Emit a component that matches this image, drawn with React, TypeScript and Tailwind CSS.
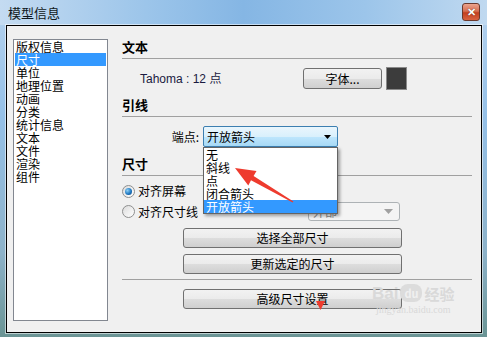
import React from "react";

const cjk = { fontFamily: '"Noto Sans CJK SC", "Liberation Sans", sans-serif' };

const listItems = ["版权信息", "尺寸", "单位", "地理位置", "动画", "分类", "统计信息", "文本", "文件", "渲染", "组件"];
const endOptions = ["无", "斜线", "点", "闭合箭头", "开放箭头"];

function WinButton({ label, className = "" }: { label: string; className?: string }) {
  return (
    <div
      className={`flex items-center justify-center rounded-[3px] border border-[#707070] bg-[linear-gradient(180deg,#f2f2f2_0%,#ebebeb_50%,#dddddd_51%,#cfcfcf_100%)] text-[12px] leading-none text-black ${className}`}
    >
      {label}
    </div>
  );
}

function Heading({ label }: { label: string }) {
  return (
    <div className="h-[19px] border-b border-[#a0a0a0] text-[13px] font-bold leading-[14px] text-black">{label}</div>
  );
}

function Radio({ checked }: { checked?: boolean }) {
  return (
    <div className="flex h-[13px] w-[13px] items-center justify-center rounded-full border border-[#8e8f8f] bg-[linear-gradient(135deg,#dcdcdc,#ffffff)]">
      {checked && (
        <div className="h-[7px] w-[7px] rounded-full bg-[radial-gradient(circle_at_35%_35%,#8fd0f5_0%,#1e78c2_55%,#0d3f78_100%)]" />
      )}
    </div>
  );
}

export default function App() {
  return (
    <div
      className="relative h-[337px] w-[487px] overflow-hidden bg-[linear-gradient(180deg,#b6d3ef_0%,#95c0e7_35%,#8db2c9_75%,#6a9494_100%)]"
      style={cjk}
    >
      {/* Title bar */}
      <div className="flex h-[25px] items-center justify-between bg-[linear-gradient(90deg,#c4dbf1_0%,#9cc5ea_30%,#85b6e4_50%,#9cc5ea_75%,#c0d9f0_100%)] pl-[8px] pr-[7px]">
        <span className="text-[13px] leading-none text-[#101820]">模型信息</span>
        <div className="mt-[-2px] flex h-[18px] w-[18px] items-center justify-center rounded-[3px] border border-[#6b3a2e] bg-[linear-gradient(180deg,#eba48e_0%,#d66f52_45%,#c23f1f_55%,#d86340_100%)]">
          <span className="text-[11px] font-bold leading-none text-white [text-shadow:0_0_1px_#4a1a10]">✕</span>
        </div>
      </div>

      {/* Client area */}
      <div className="ml-[6px] flex h-[308px] w-[476px] border border-black bg-[#f0f0f0] shadow-[0_0_0_1px_rgba(255,255,255,0.55)]">
        {/* Category list */}
        <div className="ml-[6px] mt-[13px] h-[282px] w-[95px] border border-[#828790] bg-white px-[1px]">
          {listItems.map((item, i) => (
            <div
              key={item}
              className={`h-[13px] pl-[1px] text-[12px] leading-[13px] ${i === 1 ? "bg-[#3399ff] text-white" : "text-black"}`}
            >
              {item}
            </div>
          ))}
        </div>

        {/* Settings panel */}
        <div className="ml-[14px] mt-[14px] flex w-[350px] flex-col">
          <Heading label="文本" />
          <div className="mt-[8px] flex h-[23px] items-center pl-[18px]">
            <span
              className="w-[163px] text-[12px] text-[#1a1a40]"
              style={{ fontFamily: '"Liberation Sans", "Noto Sans CJK SC", sans-serif' }}
            >
              Tahoma : 12 点
            </span>
            <WinButton label="字体..." className="h-[21px] w-[79px]" />
            <div className="ml-[4px] h-[23px] w-[21px] border border-[#8a8a8a] bg-[#3c3c3c]" />
          </div>

          <div className="mt-[8px]">
            <Heading label="引线" />
          </div>
          <div className="mt-[9px] flex h-[21px] items-center">
            <span className="w-[77px] text-right text-[12px] text-black">端点:</span>
            <div className="ml-[4px] flex h-[21px] w-[135px] items-center justify-between rounded-[2px] border border-[#3c7fb1] bg-[linear-gradient(180deg,#eaf6fd_0%,#d9f0fc_50%,#bee6fd_51%,#a7d9f5_100%)] pl-[3px] pr-[6px]">
              <span className="text-[12px] leading-none text-black">开放箭头</span>
              <svg width="7" height="4" viewBox="0 0 7 4">
                <polygon points="0,0 7,0 3.5,4" fill="#000" />
              </svg>
            </div>
          </div>

          <div className="mt-[10px]">
            <Heading label="尺寸" />
          </div>
          <div className="mt-[7px] flex h-[16px] items-center gap-[3px]">
            <Radio checked />
            <span className="text-[12px] text-black">对齐屏幕</span>
          </div>
          <div className="mt-[3px] flex h-[19px] items-center">
            <div className="flex w-[186px] items-center gap-[3px]">
              <Radio />
              <span className="text-[12px] text-black">对齐尺寸线</span>
            </div>
            <div className="flex h-[19px] w-[92px] items-center justify-between rounded-[3px] border border-[#adb2b5] bg-[#f4f4f4] pl-[4px] pr-[6px]">
              <span className="text-[12px] leading-none text-[#8a8a8a]">外部</span>
              <svg width="9" height="5" viewBox="0 0 9 5">
                <polygon points="0,0 9,0 4.5,5" fill="#a0a0a0" />
              </svg>
            </div>
          </div>

          <WinButton label="选择全部尺寸" className="ml-[61px] mt-[7px] h-[20px] w-[219px]" />
          <WinButton label="更新选定的尺寸" className="ml-[61px] mt-[6px] h-[20px] w-[219px]" />
          <div className="mt-[5px] h-px bg-[#a0a0a0]" />
          <WinButton label="高级尺寸设置" className="ml-[61px] mt-[9px] h-[20px] w-[219px]" />
        </div>
      </div>

      {/* Open dropdown list */}
      <div className="absolute left-[203px] top-[147px] w-[135px] border border-[#646464] bg-white shadow-[2px_2px_3px_rgba(0,0,0,0.35)]">
        {endOptions.map((opt, i) => (
          <div
            key={opt}
            className={`h-[13px] pl-[2px] text-[12px] leading-[13px] ${i === 4 ? "bg-[#3399ff] text-white" : "text-black"}`}
          >
            {opt}
          </div>
        ))}
      </div>

      {/* Watermark */}
      <div className="pointer-events-none absolute left-[372px] top-[284px] flex flex-col items-center text-[#d9d9d9]">
        <div className="flex items-center gap-[2px]">
          <span className="text-[17px] font-bold leading-none" style={{ fontFamily: '"Liberation Sans", sans-serif' }}>
            Bai
          </span>
          <span className="flex h-[18px] w-[22px] items-center justify-center rounded-[8px] bg-[#dcdcdc] text-[11px] font-bold leading-none text-[#f0f0f0]">
            du
          </span>
          <span className="text-[15px] font-bold leading-none">经验</span>
        </div>
        <span className="mt-[3px] text-[10px] leading-none" style={{ fontFamily: '"Liberation Serif", serif' }}>
          jingyan.baidu.com
        </span>
      </div>

      {/* Red annotation arrows */}
      <svg className="pointer-events-none absolute left-0 top-0" width="487" height="337" viewBox="0 0 487 337">
        <polygon
          points="235,168 256.5,171 253.6,175.9 293.4,201.5 292.6,202.6 251,180.3 248.3,185.5"
          fill="#ee3b2e"
        />
        <polygon points="316,301 325,301 320.5,310" fill="#ee3b2e" />
      </svg>
    </div>
  );
}
